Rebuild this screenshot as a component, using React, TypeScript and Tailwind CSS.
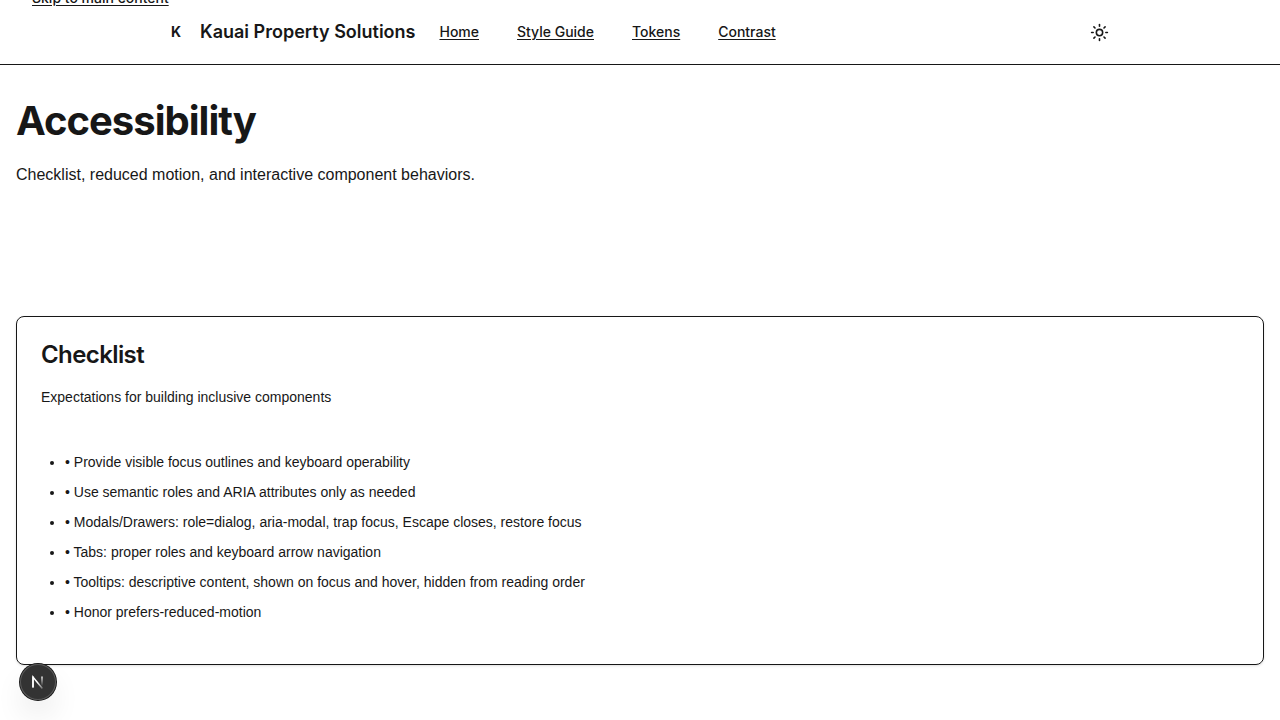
import { Sun } from "lucide-react";

const links = ["Home", "Style Guide", "Tokens", "Contrast"];

const items = [
  "Provide visible focus outlines and keyboard operability",
  "Use semantic roles and ARIA attributes only as needed",
  "Modals/Drawers: role=dialog, aria-modal, trap focus, Escape closes, restore focus",
  "Tabs: proper roles and keyboard arrow navigation",
  "Tooltips: descriptive content, shown on focus and hover, hidden from reading order",
  "Honor prefers-reduced-motion",
];

function Header() {
  return (
    <header className="border-b border-[#171717]">
      <div className="mx-auto flex h-16 max-w-5xl items-center justify-between px-8">
        <div className="flex items-center gap-6">
          <div className="flex items-center gap-2">
            <span className="flex size-8 items-center justify-center text-sm font-bold">K</span>
            <span className="text-lg font-semibold whitespace-nowrap">Kauai Property Solutions</span>
          </div>
          <nav aria-label="Main" className="flex items-center gap-[38px] text-sm font-medium">
            {links.map((label) => (
              <a key={label} href="#" className="whitespace-nowrap underline underline-offset-2">
                {label}
              </a>
            ))}
          </nav>
        </div>
        <button type="button" aria-label="Toggle theme" className="size-10 p-2.5">
          <Sun size={19} />
        </button>
      </div>
    </header>
  );
}

function DevBadge() {
  return (
    <button
      type="button"
      aria-label="Open developer tools"
      className="fixed bottom-5 left-5 flex size-9 items-center justify-center rounded-full bg-[#333333] shadow-[0_0_0_1px_#171717,inset_0_0_0_1px_#5a5a5a,0_16px_32px_-8px_rgba(0,0,0,0.24)]"
    >
      <svg width="40" height="40" viewBox="0 0 40 40" fill="none" className="shrink-0" aria-hidden="true">
        <defs>
          <linearGradient id="stem" x1="25" y1="14" x2="25" y2="24" gradientUnits="userSpaceOnUse">
            <stop stopColor="white" />
            <stop offset="1" stopColor="white" stopOpacity="0" />
          </linearGradient>
          <linearGradient id="diagonal" x1="20" y1="20" x2="26" y2="28" gradientUnits="userSpaceOnUse">
            <stop stopColor="white" />
            <stop offset="1" stopColor="white" stopOpacity="0.1" />
          </linearGradient>
        </defs>
        <path d="M15 25.5V15L24.4 26.4" stroke="url(#diagonal)" strokeWidth="1.5" />
        <path d="M15 25.5V14.4" stroke="white" strokeWidth="1.5" />
        <path d="M24 14.4V24.5" stroke="url(#stem)" strokeWidth="1.5" />
      </svg>
    </button>
  );
}

export default function App() {
  return (
    <div className="min-h-screen bg-white font-['Inter','Liberation_Sans',sans-serif] text-[#171717]">
      <a
        href="#main"
        className="absolute -top-3 left-8 text-sm font-medium underline underline-offset-2"
      >
        Skip to main content
      </a>
      <Header />
      <main id="main" className="px-4 pt-8">
        <h1 className="text-[40px] leading-12 font-bold tracking-tight">Accessibility</h1>
        <p className="mt-4 font-['Liberation_Sans',sans-serif] text-base leading-[27px]">
          Checklist, reduced motion, and interactive component behaviors.
        </p>
        <section className="mt-32 rounded-lg border border-[#171717] p-6 shadow-sm">
          <h2 className="text-2xl leading-7 font-semibold tracking-tight">Checklist</h2>
          <div className="font-['Liberation_Sans',sans-serif] text-sm">
            <p className="mt-4 leading-6">Expectations for building inclusive components</p>
            <ul className="mt-[42px] mb-[17px] list-disc space-y-2 pl-6 leading-[22px]">
              {items.map((item) => (
                <li key={item}>• {item}</li>
              ))}
            </ul>
          </div>
        </section>
      </main>
      <DevBadge />
    </div>
  );
}
